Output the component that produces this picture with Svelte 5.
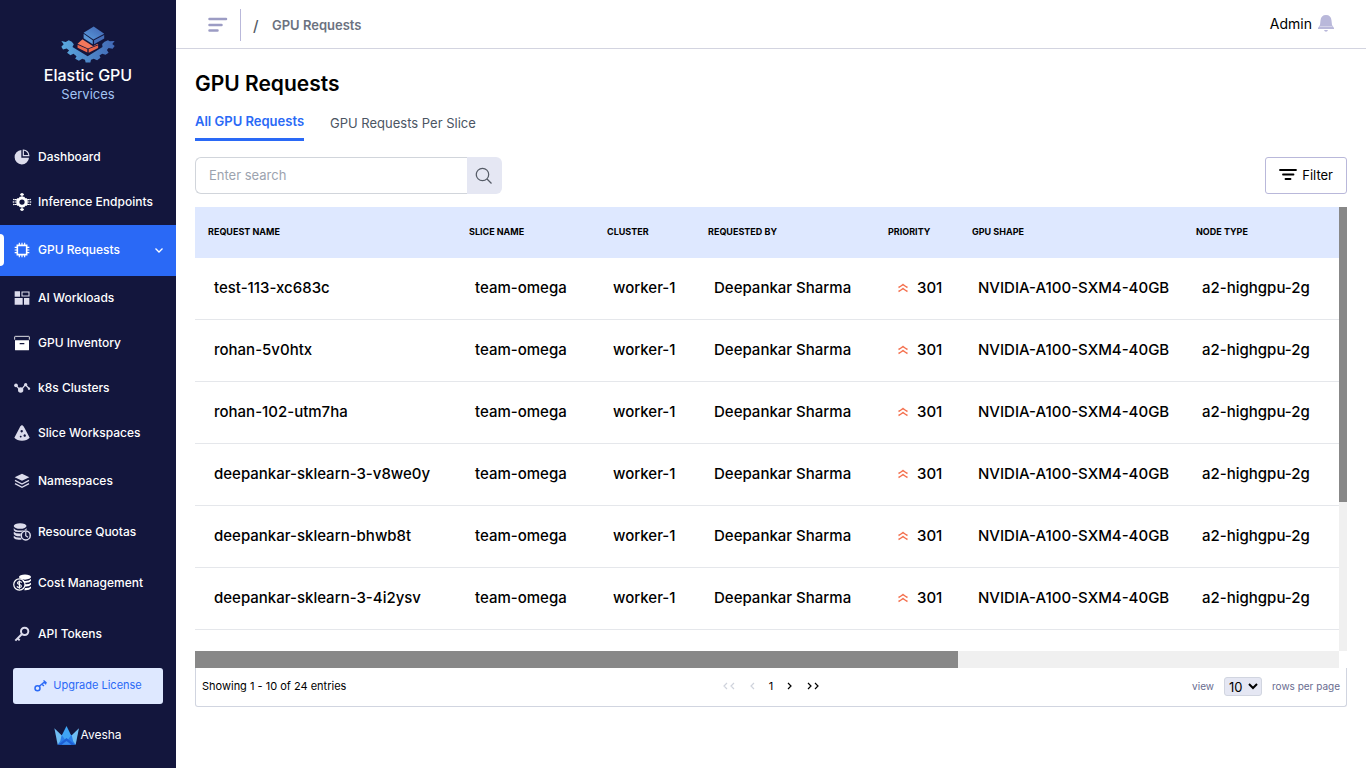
<script>
  const icons = {
    pie: '<path d="M11 1.500A10.800 10.800 0 1 0 22.500 13H11z"/><path d="M14 1.500v8.500h8.300A8.500 8.500 0 0 0 14 1.500z" fill="none" stroke="currentColor" stroke-width="1.800"/>',
    endpoint: '<path fill-rule="evenodd" d="M9 5h6l1.500 2h2l1 2v6l-1 2h-2L15 19H9l-1.500-2h-2l-1-2V9l1-2h2zM12 8.500a3.500 3.500 0 1 0 0 7 3.500 3.500 0 0 0 0-7z"/><path d="M11 0h2v5h-2zM11 19h2v5h-2zM9.500 1h5v2h-5zM9.500 21h5v2h-5zM2 8h3v1.500H2zM2 11.200h3v1.600H2zM2 14.500h3V16H2zM19 8h3v1.500h-3zM19 11.200h3v1.600h-3zM19 14.500h3V16h-3z"/><circle cx="1" cy="8.700" r="1"/><circle cx="0.500" cy="12" r="1"/><circle cx="1" cy="15.300" r="1"/><circle cx="23" cy="8.700" r="1"/><circle cx="23.500" cy="12" r="1"/><circle cx="23" cy="15.300" r="1"/>',
    chip: '<path fill="none" stroke="currentColor" stroke-width="2.400" d="M5 5h14v14H5z"/><path stroke="currentColor" stroke-width="1.700" d="M8 1v4M12 1v4M16 1v4M8 19v4M12 19v4M16 19v4M1 8h4M1 12h4M1 16h4M19 8h4M19 12h4M19 16h4"/>',
    tiles: '<path d="M1 2h8v8H1zM1 12h12v10H1zM15 12h8v10h-8z"/><path fill="none" stroke="currentColor" stroke-width="1.600" d="M12 3h10.500v6H12z"/>',
    archive: '<path fill-rule="evenodd" d="M1.500 8h21v14q0 1-1 1h-19q-1 0-1-1zM8.500 12v2h7v-2z"/><path fill="none" stroke="currentColor" stroke-width="1.300" d="M1 7V3q0-1 1-1h20q1 0 1 1v4"/>',
    nodes: '<path fill="none" stroke="currentColor" stroke-width="2" d="M3 8l7 8 7-9 6 6"/><circle cx="3" cy="8" r="2.800"/><circle cx="10" cy="15" r="4"/><circle cx="17.500" cy="7" r="2.500"/><circle cx="22.500" cy="13" r="1.800"/>',
    slice: '<path fill-rule="evenodd" d="M12 0q2.500 1 4 5l7.500 14q-4 4.500-11.500 4.500T.5 19L8 5q1-4 4-5zM11.500 7.500a1.800 1.800 0 1 0 .1 0zM16 14a1.800 1.800 0 1 0 .1 0zM10 16a1.300 1.300 0 1 0 .1 0z"/>',
    layers: '<path d="M12 1l11 5.500L12 11.500 1 6.500z"/><path fill="none" stroke="currentColor" stroke-width="2" d="M1.500 11L12 16.500 22.500 11M1.500 16L12 21.500 22.500 16"/>',
    quota: '<ellipse cx="9.500" cy="4" rx="8.500" ry="3.800"/><path d="M1 6.500q2 3.500 8.500 3.500T18 6.500v2.800q-4-.5-6 2.200Q3 13 1 9.500zM1 11.500q3 3 9.500 2.500l-.5 3.500Q3 18 1 14.500zM1 17q2 2.500 9 2.500l1.500 2.500Q3 23 1 20z"/><circle cx="17" cy="16.500" r="6" fill="#13163d" stroke="currentColor" stroke-width="2"/><path fill="none" stroke="currentColor" stroke-width="1.600" d="M17 12v5l3 2"/>',
    cost: '<ellipse cx="16" cy="4" rx="8" ry="3.500"/><path d="M12 8.500q8 2 12-2V9q-2 3.500-9 2.500zM16 13.500q5 .5 8-2V14q-2 3-8 2.500zM16 18.500q5 .5 8-2V19q-2 3-9 2.500z"/><circle cx="8.500" cy="14" r="7.500" fill="none" stroke="currentColor" stroke-width="1.600"/><path fill="none" stroke="currentColor" stroke-width="1.500" d="M11.500 11.500q-1-1.500-3-1.500t-2.500 2q0 1.500 2.500 2t2.700 2q0 2-2.700 2t-3.200-1.700M8.500 8.500v11"/>',
    key: '<circle cx="16" cy="8" r="5.500" fill="none" stroke="currentColor" stroke-width="3"/><path fill="none" stroke="currentColor" stroke-width="3" d="M12 12L2 22M5 18l3.500 3.500"/>'
  };

  const nav = [
    { label: 'Dashboard', icon: 'pie' },
    { label: 'Inference Endpoints', icon: 'endpoint', bright: true },
    { label: 'GPU Requests', icon: 'chip', tall: true, active: true, bright: true },
    { label: 'AI Workloads', icon: 'tiles' },
    { label: 'GPU Inventory', icon: 'archive', bright: true },
    { label: 'k8s Clusters', icon: 'nodes' },
    { label: 'Slice Workspaces', icon: 'slice' },
    { label: 'Namespaces', icon: 'layers', tall: true },
    { label: 'Resource Quotas', icon: 'quota', tall: true },
    { label: 'Cost Management', icon: 'cost', tall: true, bright: true },
    { label: 'API Tokens', icon: 'key', tall: true }
  ];

  const columns = [
    { title: 'Request Name', width: 261 },
    { title: 'Slice Name', width: 138 },
    { title: 'Cluster', width: 101 },
    { title: 'Requested By', width: 180 },
    { title: 'Priority', width: 84 },
    { title: 'GPU Shape', width: 224 },
    { title: 'Node Type' }
  ];

  const requests = [
    'test-113-xc683c',
    'rohan-5v0htx',
    'rohan-102-utm7ha',
    'deepankar-sklearn-3-v8we0y',
    'deepankar-sklearn-bhwb8t',
    'deepankar-sklearn-3-4i2ysv'
  ];

  let query = $state('');
  let pageSize = $state('10');
</script>

<div class="app">
  <aside>
    <div class="brand">
      <svg width="54" height="37" viewBox="183 77 160 109" aria-hidden="true">
        <defs>
          <linearGradient id="gear" x1="0" x2="1"><stop offset="0" stop-color="#5aa9de" /><stop offset="1" stop-color="#4268b5" /></linearGradient>
          <linearGradient id="cube" x1="0" x2="1" y1="1" y2="0"><stop offset="0" stop-color="#5b9bdc" /><stop offset="1" stop-color="#3f62b0" /></linearGradient>
        </defs>
        <path fill="url(#gear)" d="M184 121l13 3 9-5 9 4 6 8-4 8 45 27 44-27-1-9 7-7 10-4 6 3 14-1-7 9 7 6-6 8-12-2-5 6 5 8-9 6-10-3-8 5 3 7-10 7-10-4-8 3-2 8h-14l-2-8-8-3-10 6-11-6 4-8-9-7-9 4-10-7 6-7-7-6-11 3-5-8 7-7z" />
        <path fill="#f4775b" d="M232 129l18-16 44 18-31 12z" />
        <path fill="#e9654a" d="M232 132l29 13v10l-29-14zM265 145l28-11v8l-28 14z" />
        <path fill="#13163d" d="M246 93l34-18 35 24v17l-37 21-32-21z" />
        <path fill="url(#cube)" d="M250 97l30-19 31 22-32 17z" />
        <path fill="#5b96d6" d="M250 100l27 19v12l-27-18z" />
        <path fill="#456eb9" d="M281 119l30-16v11l-30 17z" />
      </svg>
      <strong>Elastic GPU</strong>
      <span>Services</span>
    </div>

    <nav aria-label="Main">
      {#each nav as item}
        <a href="#main" class:tall={item.tall} class:active={item.active} aria-current={item.active ? 'page' : undefined}>
          <svg class="icon" class:bright={item.bright} class:wide={['endpoint', 'quota', 'cost'].includes(item.icon)} viewBox="0 0 24 24" aria-hidden="true">{@html icons[item.icon]}</svg>
          <span>{item.label}</span>
          {#if item.active}
            <svg class="chevron" width="10" height="10" viewBox="0 0 10 10" aria-hidden="true"><path d="M1.500 3.500L5 7l3.500-3.500" fill="none" stroke="currentColor" stroke-width="1.300" /></svg>
          {/if}
        </a>
      {/each}
    </nav>

    <button class="upgrade" type="button">
      <svg width="13" height="13" viewBox="0 0 13 13" aria-hidden="true"><circle cx="3.500" cy="9.200" r="2.500" fill="none" stroke="currentColor" stroke-width="1.500" /><path d="M5.300 7.300L11 2.500M8 5l1.800 2M10 3l2.200 2.200M9.500 1.500L12.500 4" fill="none" stroke="currentColor" stroke-width="1.500" /></svg>
      Upgrade License
    </button>

    <div class="vendor">
      <svg width="25" height="19" viewBox="167 656 76 58" aria-hidden="true">
        <path fill="#2a7de8" d="M178 713l9-29 18-4 18 4 10 29z" />
        <path fill="#6fbdf3" d="M168 663l22 21-4 18-8 11z" />
        <path fill="#6fbdf3" d="M243 663l-22 21 4 18 8 11z" />
        <path fill="#3fa4f5" d="M205 656l-14 28 14 20 14-20z" />
        <path fill="#1d5fd6" d="M180 713l25-20 26 20z" />
        <path fill="#3a8df0" d="M190 713l15-11 15 11z" />
      </svg>
      <span>Avesha</span>
    </div>
  </aside>

  <div class="page">
    <header>
      <div class="trail">
        <button class="menu" type="button" aria-label="Toggle menu">
          <svg width="20" height="16" viewBox="0 0 20 16" aria-hidden="true"><path d="M1.500 2h16.500M1.500 8h12M1.500 13.500h8" stroke="#9c9cc4" stroke-width="2.500" stroke-linecap="round" /></svg>
        </button>
        <span class="rule"></span>
        <span class="slash">/</span>
        <span class="crumb">GPU Requests</span>
      </div>
      <div class="account">
        <span>Admin</span>
        <svg width="16" height="17" viewBox="0 0 16 17" aria-hidden="true"><path fill="#b9b8da" d="M8 0q5 0 5.500 5.500L14 10l2 3v1H0v-1l2-3 .5-4.500Q3 0 8 0zM6 15h4q-.5 1.700-2 1.700T6 15z" /><path d="M1.500 11.500h13" stroke="#d3d2e8" stroke-width="1" /></svg>
      </div>
    </header>

    <main id="main">
      <h1>GPU Requests</h1>
      <div class="tabs" role="tablist">
        <button type="button" role="tab" aria-selected="true" class="selected">All GPU Requests</button>
        <button type="button" role="tab" aria-selected="false">GPU Requests Per Slice</button>
      </div>

      <div class="tools">
        <div class="search">
          <input type="text" placeholder="Enter search" aria-label="Search requests" bind:value={query} />
          <button type="button" aria-label="Search">
            <svg width="18" height="18" viewBox="0 0 18 18" aria-hidden="true"><circle cx="7.500" cy="7.500" r="6.200" /><path d="M12 12l4.500 4.500" /></svg>
          </button>
        </div>
        <button class="filter" type="button">
          <svg width="18" height="13" viewBox="0 0 18 13" aria-hidden="true"><path d="M1 2h16M4 6.500h10.500M6.500 11h5" stroke="currentColor" stroke-width="1.800" stroke-linecap="round" /></svg>
          Filter
        </button>
      </div>

      <div class="grid">
        <div class="viewport">
          <table>
            <colgroup>
              {#each columns as column}
                <col style:width={column.width ? `${column.width}px` : 'auto'} />
              {/each}
            </colgroup>
            <thead>
              <tr>{#each columns as column}<th scope="col">{column.title}</th>{/each}</tr>
            </thead>
            <tbody>
              {#each requests as name}
                <tr>
                  <td>{name}</td>
                  <td>team-omega</td>
                  <td>worker-1</td>
                  <td>Deepankar Sharma</td>
                  <td>
                    <span class="priority">
                      <svg width="12" height="10" viewBox="0 0 12 10" aria-hidden="true"><path d="M1.500 4.500Q3.500 3.500 6 1.500q2.500 2 4.500 3M1.500 8.500Q3.500 7.500 6 5.500q2.500 2 4.500 3" fill="none" stroke="#f4714f" stroke-width="1.500" /></svg>
                      301
                    </span>
                  </td>
                  <td>NVIDIA-A100-SXM4-40GB</td>
                  <td>a2-highgpu-2g</td>
                </tr>
              {/each}
            </tbody>
          </table>
        </div>
        <div class="track vertical"><div class="thumb"></div></div>
        <div class="track horizontal"><div class="thumb"></div></div>
      </div>

      <footer>
        <span class="summary">Showing 1 - 10 of 24 entries</span>
        <div class="pager">
          <button type="button" disabled aria-label="First page"><svg width="13" height="8" viewBox="0 0 13 8"><path d="M5 1L2 4l3 3M12 1L9 4l3 3" /></svg></button>
          <button type="button" disabled aria-label="Previous page"><svg width="6" height="8" viewBox="0 0 6 8"><path d="M5 1L2 4l3 3" /></svg></button>
          <span>1</span>
          <button type="button" aria-label="Next page"><svg width="6" height="8" viewBox="0 0 6 8"><path d="M1 1l3 3-3 3" /></svg></button>
          <button type="button" aria-label="Last page"><svg width="13" height="8" viewBox="0 0 13 8"><path d="M1 1l3 3-3 3M8 1l3 3-3 3" /></svg></button>
        </div>
        <div class="size">
          <label for="page-size">view</label>
          <select id="page-size" bind:value={pageSize}><option>10</option></select>
          <span>rows per page</span>
        </div>
      </footer>
    </main>
  </div>
</div>

<style>
  :global(body) {
    margin: 0;
    background: #fff;
  }
  .app {
    display: grid;
    grid-template-columns: 176px minmax(0, 1fr);
    font-family: Inter, "Open Sans", sans-serif;
    color: #000;
  }
  .app * {
    box-sizing: border-box;
  }
  button {
    font: inherit;
    color: inherit;
    border: 0;
    padding: 0;
    background: none;
    cursor: pointer;
  }
  svg {
    display: block;
    flex: none;
  }

  aside {
    display: flex;
    flex-direction: column;
    background: #13163d;
    color: #fff;
    padding-bottom: 22px;
  }
  .brand {
    display: flex;
    flex-direction: column;
    align-items: center;
    padding: 26px 0 32px;
  }
  .brand strong {
    font-size: 16px;
    font-weight: 500;
    line-height: 20px;
    margin-top: 2px;
  }
  .brand span {
    font-size: 13px;
    line-height: 18px;
    color: #a3c4f3;
  }
  nav a {
    display: flex;
    align-items: center;
    height: 45px;
    padding: 0 12px 2px 11px;
    font-size: 12px;
    font-weight: 500;
    color: #fff;
    text-decoration: none;
    white-space: nowrap;
  }
  nav a.tall {
    height: 51px;
  }
  nav a.active {
    position: relative;
    background: #2a69f6;
  }
  nav a.active::before {
    content: "";
    position: absolute;
    left: 0;
    top: 9px;
    bottom: 10px;
    width: 4px;
    border-radius: 0 4px 4px 0;
    background: #fff;
  }
  .icon {
    width: 16px;
    height: 16px;
    margin: 0 8px 0 3px;
    color: #dcdcec;
    fill: currentColor;
    overflow: visible;
  }
  .icon.wide {
    width: 18px;
    height: 18px;
    margin: 0 7px 0 2px;
  }
  .icon.bright {
    color: #fff;
  }
  .chevron {
    margin-left: auto;
  }
  .upgrade {
    display: flex;
    align-items: center;
    justify-content: center;
    gap: 6px;
    height: 36px;
    margin: 8px 13px 0;
    padding-bottom: 2px;
    border-radius: 3px;
    background: #dee8ff;
    color: #2a69f6;
    font-size: 11px;
  }
  .vendor {
    display: flex;
    align-items: center;
    justify-content: center;
    gap: 1px;
    margin-top: 20px;
    font-size: 12px;
    line-height: 22px;
  }

  header {
    display: flex;
    justify-content: space-between;
    height: 49px;
    padding: 0 32px;
    border-bottom: 1px solid #d3d4e0;
  }
  .trail {
    display: flex;
    align-items: center;
    padding-top: 2px;
  }
  .rule {
    width: 1px;
    height: 32px;
    margin: 0 12px;
    background: #b9b8da;
  }
  .slash {
    width: 19px;
    font-size: 15px;
    font-weight: 500;
    color: #555b66;
  }
  .crumb {
    font-size: 13px;
    font-weight: 600;
    color: #6b7280;
  }
  .account {
    display: flex;
    align-items: center;
    gap: 6px;
    padding-bottom: 2px;
    font-size: 14px;
  }

  main {
    padding: 19px 19px 0;
  }
  h1 {
    margin: 0;
    font-size: 21px;
    font-weight: 600;
    line-height: 32px;
  }
  .tabs {
    display: flex;
    gap: 26px;
    height: 41px;
    padding-top: 8px;
  }
  .tabs button {
    font-size: 13px;
    color: #4b5563;
    padding-bottom: 4px;
  }
  .tabs .selected {
    font-weight: 600;
    color: #2a69f6;
    border-bottom: 3px solid #2a69f6;
  }
  .tools {
    display: flex;
    justify-content: space-between;
    margin: 16px 0 13px;
  }
  .search {
    display: flex;
    width: 307px;
    height: 37px;
  }
  .search input {
    flex: 1;
    min-width: 0;
    padding: 0 13px 2px;
    border: 1px solid #d1d5db;
    border-right: 0;
    border-radius: 6px 0 0 6px;
    font: inherit;
    font-size: 13px;
    outline: none;
  }
  .search input::placeholder {
    color: #9ca3af;
  }
  .search button {
    display: grid;
    place-items: center;
    width: 35px;
    padding-right: 2px;
    border-radius: 0 6px 6px 0;
    background: #e5e7f3;
  }
  .search svg {
    fill: none;
    stroke: #555b66;
    stroke-width: 1.200;
  }
  .filter {
    display: flex;
    align-items: center;
    gap: 5px;
    padding: 0 13px 2px;
    border: 1px solid #b9b8da;
    border-radius: 3px;
    font-size: 13px;
  }

  .grid {
    display: grid;
    grid-template-columns: minmax(0, 1fr) 8px;
    grid-template-rows: 444px 17px;
  }
  .viewport {
    overflow: hidden;
  }
  table {
    width: 100%;
    table-layout: fixed;
    border-collapse: separate;
    border-spacing: 0;
  }
  th {
    height: 51px;
    padding: 0 13px 2px;
    background: #dee8ff;
    font-size: 9px;
    font-weight: 700;
    text-align: left;
    text-transform: uppercase;
    white-space: nowrap;
  }
  td {
    height: 62px;
    padding: 0 0 2px 19px;
    border-bottom: 1px solid #e5e7eb;
    font-size: 15px;
    font-weight: 500;
    white-space: nowrap;
  }
  .priority {
    display: flex;
    align-items: center;
    gap: 8px;
    margin-left: 3px;
  }
  .track {
    background: #f0f0f0;
  }
  .thumb {
    background: #888;
  }
  .vertical .thumb {
    height: 295px;
  }
  .horizontal .thumb {
    width: 66.700%;
    height: 100%;
  }
  footer {
    display: grid;
    grid-template-columns: 1fr auto 1fr;
    align-items: center;
    height: 39px;
    padding: 0 6px 2px;
    border: 1px solid #d1d5e0;
    border-top: 0;
    border-radius: 0 0 3px 3px;
    font-size: 11px;
  }
  .pager {
    display: flex;
    align-items: center;
    gap: 14px;
  }
  .pager button {
    color: #000;
  }
  .pager button:disabled {
    color: #cfd3dc;
  }
  .pager path {
    fill: none;
    stroke: currentColor;
    stroke-width: 1.200;
  }
  .size {
    display: flex;
    align-items: center;
    justify-content: flex-end;
    gap: 10px;
    font-size: 10px;
    color: #686b8f;
  }
  select {
    height: 19px;
    width: 38px;
    padding: 0;
    border: 1px solid #d1d5e0;
    border-radius: 3px;
    background: #e5e7f3;
    font: inherit;
    font-size: 13px;
    color: #000;
  }
</style>
